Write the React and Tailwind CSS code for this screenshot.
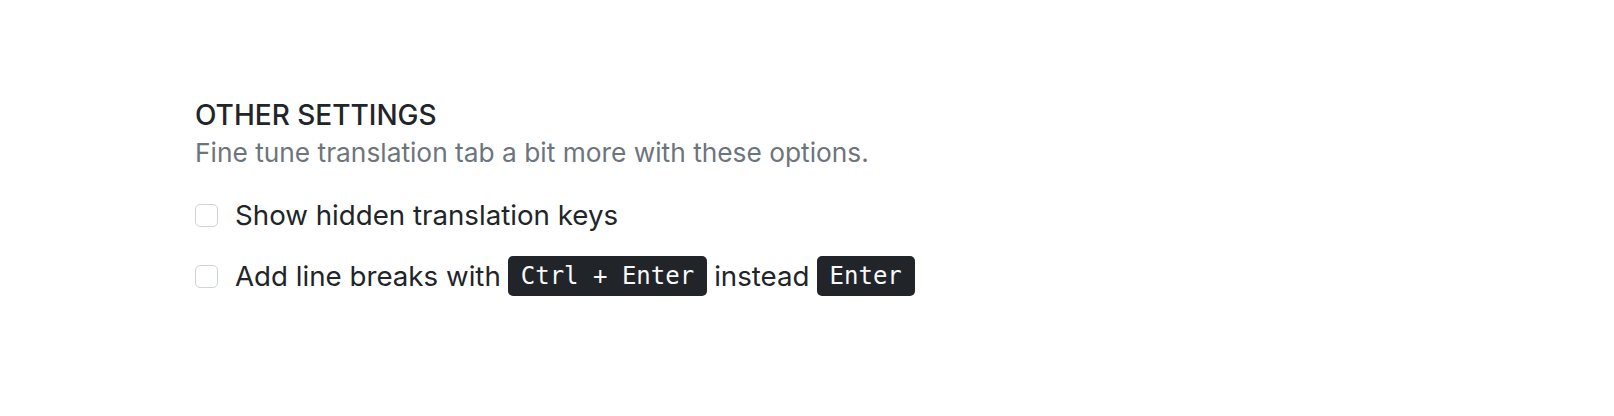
import React from "react";

function Kbd({ children }) {
  return (
    <kbd className="inline-flex items-center h-[40px] px-[13px] rounded-[5px] bg-[#212529] text-[#f8f9fa] text-[24px] leading-none font-['DejaVu_Sans_Mono',monospace]">
      {children}
    </kbd>
  );
}

function Check({ children }) {
  return (
    <label className="flex items-center gap-[17px] h-[40px]">
      <input
        type="checkbox"
        className="appearance-none w-[23px] h-[23px] rounded-[5px] border border-[#ced4da] bg-white shrink-0"
      />
      <span className="flex items-center gap-[7px] text-[27.7px] leading-[34px] text-[#212529]">{children}</span>
    </label>
  );
}

export default function App() {
  return (
    <div className="w-[1614px] h-[416px] bg-white font-['Inter',sans-serif]">
      <div className="pl-[195px] pt-[98px]">
        <h3 className="text-[28px] leading-[34px] font-medium text-[#212529]">OTHER SETTINGS</h3>
        <p className="mt-[5px] text-[26.3px] leading-[32px] text-[#6c757d]">
          Fine tune translation tab a bit more with these options.
        </p>
        <div className="mt-[26px] flex flex-col gap-[21px]">
          <Check>Show hidden translation keys</Check>
          <Check>
            Add line breaks with <Kbd>Ctrl + Enter</Kbd> instead <Kbd>Enter</Kbd>
          </Check>
        </div>
      </div>
    </div>
  );
}
